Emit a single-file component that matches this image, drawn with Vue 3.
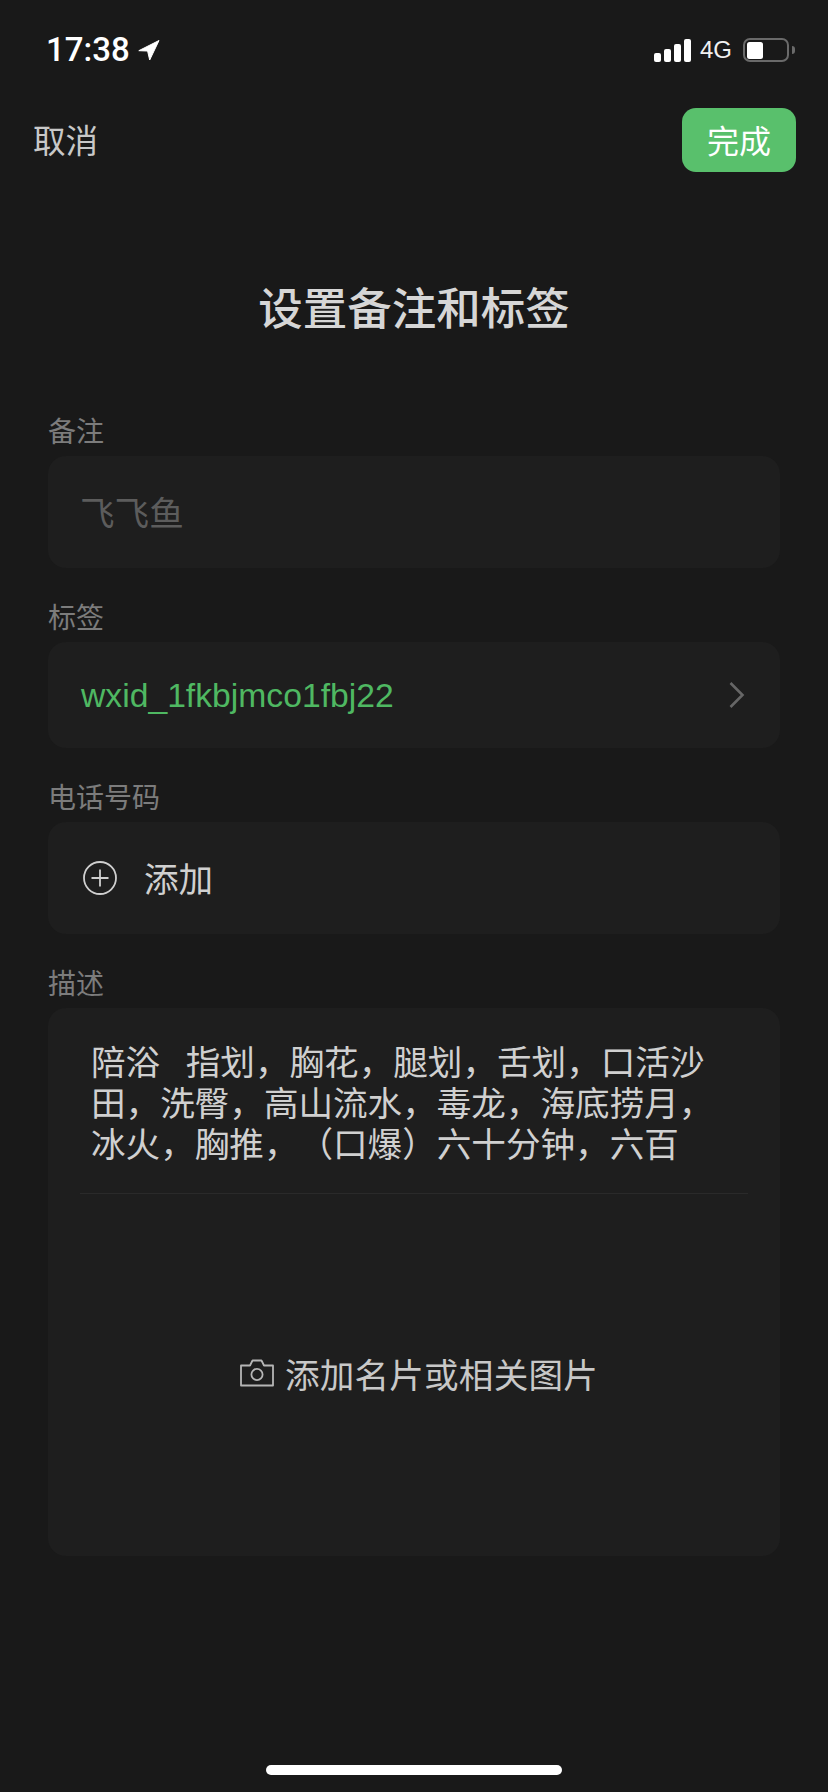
<script setup>
const note = '飞飞鱼';
const tagValue = 'wxid_1fkbjmco1fbj22';
const description = '陪浴   指划，胸花，腿划，舌划，口活沙田，洗臀，高山流水，毒龙，海底捞月，冰火，胸推，（口爆）六十分钟，六百';
</script>

<template>
  <div class="page">
    <div class="status-bar">
      <div class="status-left">
        <span class="time">17:38</span>
        <svg class="location" width="22" height="21" viewBox="0 0 22 21">
          <path d="M21 0.5 L0.8 10.7 L9.6 11 L11.7 20 Z" fill="#fff" stroke="#fff" stroke-width="1" stroke-linejoin="round" />
        </svg>
      </div>
      <div class="status-right">
        <div class="signal">
          <i class="bar bar-1"></i>
          <i class="bar bar-2"></i>
          <i class="bar bar-3"></i>
          <i class="bar bar-4"></i>
        </div>
        <span class="network">4G</span>
        <div class="battery">
          <div class="battery-level"></div>
        </div>
        <div class="battery-cap"></div>
      </div>
    </div>

    <div class="nav">
      <span class="cancel">取消</span>
      <span class="done">完成</span>
    </div>

    <h1 class="title">设置备注和标签</h1>

    <div class="form">
      <div class="label">备注</div>
      <div class="card card-note">
        <span class="placeholder">{{ note }}</span>
      </div>

      <div class="label">标签</div>
      <div class="card card-tag">
        <span class="tag-value">{{ tagValue }}</span>
        <svg class="chevron" width="18" height="28" viewBox="0 0 18 28">
          <path d="M2.5 2 L14.5 14 L2.5 26" fill="none" stroke="#666" stroke-width="2.6" />
        </svg>
      </div>

      <div class="label">电话号码</div>
      <div class="card card-phone">
        <svg class="plus" width="34" height="34" viewBox="0 0 34 34">
          <circle cx="17" cy="17" r="16" fill="none" stroke="#cfcfcf" stroke-width="1.8" />
          <path d="M17 8.5 V25.5 M8.5 17 H25.5" fill="none" stroke="#cfcfcf" stroke-width="1.8" />
        </svg>
        <span class="add-text">添加</span>
      </div>

      <div class="label">描述</div>
      <div class="card card-desc">
        <p class="desc-text">{{ description }}</p>
        <div class="divider"></div>
        <div class="photo-row">
          <svg class="camera" width="34" height="28" viewBox="0 0 34 28">
            <path d="M1 6.5 H10 L12.5 1.5 H21.5 L24 6.5 H33 V26.5 H1 Z" fill="none" stroke="#b5b5b5" stroke-width="1.8" stroke-linejoin="round" />
            <circle cx="17" cy="15.5" r="5.6" fill="none" stroke="#b5b5b5" stroke-width="1.8" />
          </svg>
          <span class="photo-text">添加名片或相关图片</span>
        </div>
      </div>
    </div>

    <div class="home-indicator"></div>
  </div>
</template>

<style scoped>
.page {
  width: 828px;
  height: 1792px;
  background: #191919;
  font-family: "Noto Sans CJK SC", "Liberation Sans", sans-serif;
  text-spacing-trim: space-all;
  display: flex;
  flex-direction: column;
  overflow: hidden;
}

.status-bar {
  height: 100px;
  padding: 30px 33px 0 46px;
  box-sizing: border-box;
  display: flex;
  justify-content: space-between;
  align-items: flex-start;
  color: #fff;
}

.status-left {
  display: flex;
  align-items: center;
  gap: 8px;
}

.time {
  font-family: Roboto, "Liberation Sans", sans-serif;
  font-size: 33px;
  font-weight: 500;
  line-height: 40px;
}

.status-right {
  display: flex;
  align-items: center;
  height: 40px;
}

.signal {
  display: flex;
  align-items: flex-end;
  gap: 3px;
  height: 23px;
}

.bar {
  display: block;
  width: 7px;
  background: #fff;
  border-radius: 2px;
}

.bar-1 { height: 9px; }
.bar-2 { height: 13px; }
.bar-3 { height: 18px; }
.bar-4 { height: 23px; }

.network {
  font-family: "Liberation Sans", sans-serif;
  font-size: 24px;
  line-height: 40px;
  margin-left: 9px;
  color: #f0f0f0;
}

.battery {
  width: 46px;
  height: 24px;
  margin-left: 11px;
  box-sizing: border-box;
  border: 2px solid #6a6a6a;
  border-radius: 7px;
  padding: 1.5px;
}

.battery-level {
  width: 16px;
  height: 100%;
  background: #fff;
  border-radius: 2.5px;
}

.battery-cap {
  width: 3px;
  height: 8px;
  margin-left: 3px;
  background: #6a6a6a;
  border-radius: 0 3px 3px 0;
}

.nav {
  height: 64px;
  margin-top: 8px;
  padding: 0 32px 0 33px;
  display: flex;
  justify-content: space-between;
  align-items: center;
}

.cancel {
  font-size: 32.6px;
  color: #c8c8c8;
  padding-bottom: 3px;
}

.done {
  width: 114px;
  height: 64px;
  box-sizing: border-box;
  padding-bottom: 3px;
  display: flex;
  align-items: center;
  justify-content: center;
  background: #59c06c;
  border-radius: 14px;
  color: #fff;
  font-size: 32px;
}

.title {
  margin: 103px 0 0;
  text-align: center;
  font-size: 44.5px;
  line-height: 62px;
  font-weight: 500;
  color: #d6d6d6;
}

.form {
  margin-top: 73px;
  padding: 0 48px;
}

.label {
  font-size: 28px;
  line-height: 40px;
  height: 40px;
  margin-top: 28px;
  color: #7c7c7c;
}

.label:first-child {
  margin-top: 0;
}

.card {
  background: #1e1e1e;
  border-radius: 18px;
  box-sizing: border-box;
  margin-top: 6px;
}

.card-note {
  height: 112px;
  padding: 0 32px 3px;
  display: flex;
  align-items: center;
}

.placeholder {
  font-size: 34.6px;
  color: #5c5c5c;
}

.card-tag {
  height: 106px;
  padding: 0 34px 0 33px;
  display: flex;
  align-items: center;
  justify-content: space-between;
}

.tag-value {
  font-family: "Liberation Sans", sans-serif;
  font-size: 33.7px;
  color: #4fb862;
}

.card-phone {
  height: 112px;
  padding: 0 35px;
  display: flex;
  align-items: center;
  gap: 27px;
}

.add-text {
  font-size: 34.6px;
  color: #d0d0d0;
  padding-bottom: 3px;
}

.card-desc {
  height: 548px;
  padding: 32px 32px 0;
}

.desc-text {
  margin: 0;
  padding: 0 11px;
  width: 650px;
  box-sizing: border-box;
  font-size: 34.6px;
  line-height: 41px;
  color: #d0d0d0;
  white-space: pre-wrap;
  word-spacing: 0.8px;
}

.divider {
  margin-top: 30px;
  height: 1px;
  background: #2a2a2a;
}

.photo-row {
  margin-top: 154px;
  padding-left: 10px;
  display: flex;
  align-items: center;
  justify-content: center;
  gap: 11px;
}

.photo-text {
  font-size: 34.6px;
  letter-spacing: 0.2px;
  color: #c8c8c8;
}

.home-indicator {
  position: absolute;
  left: 266px;
  top: 1765px;
  width: 296px;
  height: 10px;
  border-radius: 5px;
  background: #fff;
}
</style>

<style>
html,
body {
  margin: 0;
  background: #191919;
}
</style>
